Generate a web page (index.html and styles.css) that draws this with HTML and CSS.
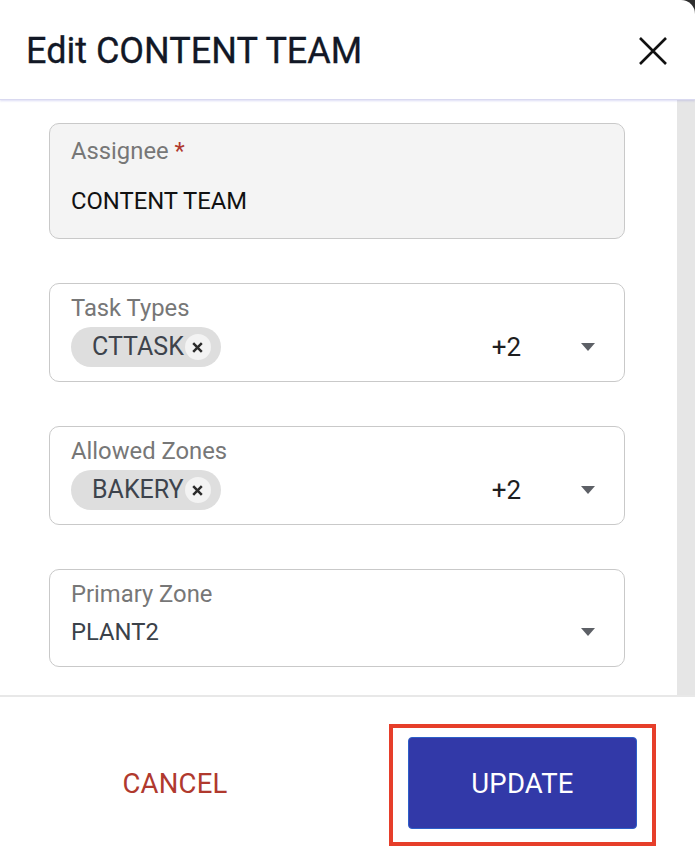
FILE: index.html
```html
<!DOCTYPE html>
<html>
<head>
<meta charset="utf-8">
<link rel="stylesheet" href="styles.css">
</head>
<body>
<div class="dialog">
  <div class="header">
    <div class="title">Edit CONTENT TEAM</div>
    <svg class="close" width="30" height="30" viewBox="0 0 30 30"><path d="M2 2 L28 28 M28 2 L2 28" stroke="#111" stroke-width="2.6" fill="none"/></svg>
  </div>
  <div class="scroll">
    <div class="content">
      <div class="field disabled">
        <div class="label">Assignee <span class="req">*</span></div>
        <div class="value plain">CONTENT TEAM</div>
      </div>
      <div class="field">
        <div class="label">Task Types</div>
        <div class="row">
          <span class="chip"><span class="chip-text">CTTASK</span><span class="chip-x"><svg width="11" height="11" viewBox="0 0 11 11"><path d="M1.2 1.2 L9.8 9.8 M9.8 1.2 L1.2 9.8" stroke="#2b2b2b" stroke-width="2.5" fill="none"/></svg></span></span>
          <span class="more">+2</span>
          <span class="arrow"></span>
        </div>
      </div>
      <div class="field">
        <div class="label">Allowed Zones</div>
        <div class="row">
          <span class="chip"><span class="chip-text">BAKERY</span><span class="chip-x"><svg width="11" height="11" viewBox="0 0 11 11"><path d="M1.2 1.2 L9.8 9.8 M9.8 1.2 L1.2 9.8" stroke="#2b2b2b" stroke-width="2.5" fill="none"/></svg></span></span>
          <span class="more">+2</span>
          <span class="arrow"></span>
        </div>
      </div>
      <div class="field">
        <div class="label">Primary Zone</div>
        <div class="row single">
          <span class="value">PLANT2</span>
          <span class="arrow"></span>
        </div>
      </div>
    </div>
    <div class="track"></div>
  </div>
  <div class="footer">
    <div class="cancel">CANCEL</div>
    <div class="highlight">
      <div class="update">UPDATE</div>
    </div>
  </div>
</div>
</body>
</html>
```
FILE: styles.css
```css
html, body {
  margin: 0;
  padding: 0;
}
body {
  background: #2e2e2e;
  font-family: Roboto, "Liberation Sans", sans-serif;
}
.dialog {
  width: 695px;
  height: 864px;
  background: #fff;
  border-top-right-radius: 14px;
  display: flex;
  flex-direction: column;
  overflow: hidden;
}
.header {
  box-sizing: border-box;
  height: 100px;
  padding: 3px 27px 0 26px;
  display: flex;
  align-items: center;
  justify-content: space-between;
  border-bottom: 1px solid #d9d9f0;
  box-shadow: 0 1px 2px rgba(110, 110, 210, 0.25);
  position: relative;
  z-index: 1;
}
.title {
  font-size: 36px;
  line-height: 41px;
  font-weight: 400;
  color: #121826;
  -webkit-text-stroke: 0.3px #121826;
}
.close {
  display: block;
}
.scroll {
  height: 595px;
  display: flex;
}
.content {
  flex: 1;
  padding: 23px 52px 0 49px;
  display: flex;
  flex-direction: column;
  gap: 44px;
}
.track {
  width: 18px;
  background: #e6e6e6;
}
.field {
  border: 1px solid #c9c9c9;
  border-radius: 10px;
  padding: 10px 0 14px 21px;
}
.field.disabled {
  background: #f4f4f4;
  padding: 13px 0 23px 21px;
}
.label {
  font-size: 23.8px;
  line-height: 28px;
  color: #777;
}
.req {
  color: #b0392e;
}
.value {
  font-size: 23.8px;
  line-height: 28px;
  color: #3b424a;
}
.value.plain {
  color: #111;
  margin-top: 22px;
}
.row {
  display: flex;
  align-items: center;
  margin-top: 5px;
  height: 40px;
}
.row.single {
  margin-top: 4px;
  height: 40px;
}
.chip {
  display: inline-flex;
  align-items: center;
  height: 40px;
  border-radius: 20px;
  background: #dedede;
  padding: 0 10px 0 21px;
}
.chip-text {
  font-size: 25px;
  line-height: 40px;
  color: #3d434c;
}
.chip-x {
  width: 26px;
  height: 26px;
  border-radius: 50%;
  background: #f3f3f3;
  margin-left: 1px;
  display: flex;
  align-items: center;
  justify-content: center;
}
.chip-x svg {
  display: block;
}
.more {
  margin-left: auto;
  font-size: 26px;
  line-height: 40px;
  color: #1e1e1e;
}
.arrow {
  width: 0;
  height: 0;
  border-left: 7.5px solid transparent;
  border-right: 7.5px solid transparent;
  border-top: 8px solid #5d6066;
  margin-left: 60px;
  margin-right: 29px;
}
.row.single .arrow {
  margin-left: auto;
}
.footer {
  flex: 1;
  border-top: 2px solid #e8e8e8;
  display: flex;
  align-items: flex-start;
  padding: 27px 0 0 60px;
}
.cancel {
  width: 230px;
  height: 92px;
  margin-top: 13px;
  display: flex;
  align-items: center;
  justify-content: center;
  font-size: 27.5px;
  color: #b0392e;
  letter-spacing: 0.2px;
}
.highlight {
  margin-left: 99px;
  border: 4px solid #e63e2a;
  padding: 9px 15px 13px 15px;
}
.update {
  box-sizing: border-box;
  width: 229px;
  height: 92px;
  background: #3239a8;
  border: 1px solid #2d5fc9;
  border-radius: 4px;
  display: flex;
  align-items: center;
  justify-content: center;
  font-size: 27.5px;
  color: #fff;
  letter-spacing: 0.2px;
}
```
